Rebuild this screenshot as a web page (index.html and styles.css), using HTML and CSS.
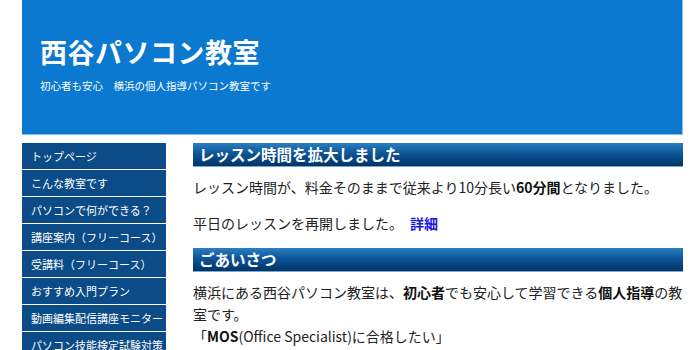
FILE: index.html
```html
<!DOCTYPE html>
<html lang="ja">
<head>
<meta charset="utf-8">
<title>西谷パソコン教室</title>
<link rel="stylesheet" href="styles.css">
</head>
<body>
<div class="page">
  <header class="site-header">
    <h1 class="site-title">西谷パソコン教室</h1>
    <p class="site-desc">初心者も安心　横浜の個人指導パソコン教室です</p>
  </header>
  <div class="layout">
    <nav class="side-nav">
      <ul class="menu">
        <li><a href="#">トップページ</a></li>
        <li><a href="#">こんな教室です</a></li>
        <li><a href="#">パソコンで何ができる？</a></li>
        <li><a href="#">講座案内（フリーコース）</a></li>
        <li><a href="#">受講料（フリーコース）</a></li>
        <li><a href="#">おすすめ入門プラン</a></li>
        <li><a href="#">動画編集配信講座モニター</a></li>
        <li><a href="#">パソコン技能検定試験対策</a></li>
      </ul>
    </nav>
    <main class="main">
      <h2 class="sec-title">レッスン時間を拡大しました</h2>
      <p class="text">レッスン時間が、料金そのままで従来より10分長い<strong>60分間</strong>となりました。</p>
      <p class="text">平日のレッスンを再開しました。　<a class="more" href="#">詳細</a></p>
      <h2 class="sec-title">ごあいさつ</h2>
      <p class="text">横浜にある西谷パソコン教室は、<strong>初心者</strong>でも安心して学習できる<strong>個人指導</strong>の教室です。<br>「<strong>MOS</strong>(Office Specialist)に合格したい」</p>
    </main>
  </div>
</div>
</body>
</html>
```
FILE: styles.css
```css
html, body {
  margin: 0;
  padding: 0;
  background: #ffffff;
}
body {
  font-family: "Noto Sans CJK JP", "Noto Sans", sans-serif;
  color: #222222;
}
.page {
  width: 661px;
  margin-left: 22px;
}
.site-header {
  box-sizing: border-box;
  height: 135px;
  background: #0a79cf;
  border-right: 1px solid #8dbfe6;
  border-bottom: 1px solid #8dbfe6;
  padding: 34px 0 0 18px;
  color: #ffffff;
}
.site-title {
  margin: 0;
  font-size: 27px;
  line-height: 36px;
  font-weight: bold;
  letter-spacing: 0.5px;
}
.site-desc {
  margin: 8px 0 0 0;
  font-size: 10.5px;
  line-height: 16px;
}
.layout {
  display: flex;
  gap: 27px;
  margin-top: 8px;
}
.side-nav {
  width: 144px;
  flex: none;
}
.menu {
  list-style: none;
  margin: 0;
  padding: 0;
}
.menu li {
  border-bottom: 1px solid #ffffff;
}
.menu a {
  display: block;
  height: 26px;
  line-height: 26px;
  padding-left: 9px;
  background: #0b4c88;
  color: #ffffff;
  font-size: 11px;
  text-decoration: none;
  white-space: nowrap;
  overflow: hidden;
}
.main {
  flex: 1;
  min-width: 0;
}
.sec-title {
  margin: 0;
  height: 23px;
  line-height: 23px;
  padding-left: 6px;
  background: linear-gradient(to bottom, #2a7fc2 0%, #0d5597 45%, #003468 100%);
  border-bottom: 1px solid #7fa8cf;
  color: #ffffff;
  font-size: 15.5px;
  font-weight: bold;
}
.text {
  margin: 9px 0 14px 0;
  font-size: 14px;
  line-height: 22px;
}
.text strong {
  font-weight: bold;
  color: #111111;
}
.more {
  color: #1a1adf;
  font-weight: bold;
  text-decoration: none;
}
```
